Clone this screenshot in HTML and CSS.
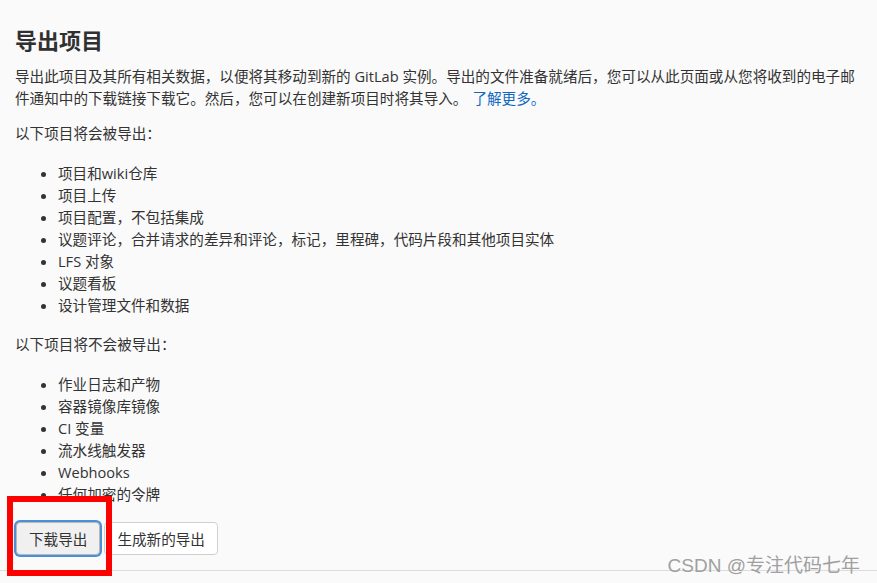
FILE: index.html
```html
<!DOCTYPE html>
<html lang="zh-CN">
<head>
    <meta charset="UTF-8">
    <title>导出项目</title>
    <link rel="stylesheet" href="styles.css">
</head>
<body>
    <div class="page">
        <div class="content">
            <h3 class="title">导出项目</h3>
            <p class="intro">导出此项目及其所有相关数据，以便将其移动到新的 GitLab 实例。导出的文件准备就绪后，您可以从此页面或从您将收到的电子邮件通知中的下载链接下载它。然后，您可以在创建新项目时将其导入。<a href="#">了解更多。</a></p>

            <p class="label">以下项目将会被导出：</p>
            <ul class="items">
                <li>项目和wiki仓库</li>
                <li>项目上传</li>
                <li>项目配置，不包括集成</li>
                <li>议题评论，合并请求的差异和评论，标记，里程碑，代码片段和其他项目实体</li>
                <li>LFS 对象</li>
                <li>议题看板</li>
                <li>设计管理文件和数据</li>
            </ul>

            <p class="label">以下项目将不会被导出：</p>
            <ul class="items">
                <li>作业日志和产物</li>
                <li>容器镜像库镜像</li>
                <li>CI 变量</li>
                <li>流水线触发器</li>
                <li>Webhooks</li>
                <li>任何加密的令牌</li>
            </ul>

            <div class="actions">
                <button class="btn btn-download">下载导出</button>
                <button class="btn">生成新的导出</button>
            </div>
        </div>
        <div class="footer-line"></div>

        <!-- annotation + watermark from the screenshot -->
        <div class="highlight"></div>
        <div class="watermark">CSDN @专注代码七年</div>
    </div>
</body>
</html>
```

FILE: styles.css
```css
body {
    margin: 0;
    background-color: #fafafa;
    font-family: "Open Sans", "Noto Sans CJK SC", sans-serif;
    color: #333;
}

.page {
    position: relative;
    width: 877px;
    height: 583px;
    overflow: hidden;
}

.content {
    padding: 27px 20px 0 15px;
    font-size: 14.6px;
    line-height: 22px;
}

.title {
    margin: 0 0 12px;
    font-size: 22px;
    line-height: 26px;
    font-weight: bold;
    color: #303030;
}

.intro {
    margin: 0 0 13px;
}

.intro a {
    margin-left: 5px;
    color: #1068bf;
    text-decoration: none;
}

.label {
    margin: 0 0 18px;
}

.items {
    margin: 0 0 17px;
    padding-left: 43px;
}

.actions {
    display: flex;
    gap: 4px;
    margin-top: 16px;
}

.btn {
    height: 33px;
    padding: 0 12px;
    font-family: inherit;
    font-size: 14.6px;
    color: #333;
    background: #fff;
    border: 1px solid #d0d0d0;
    border-radius: 4px;
}

.btn-download {
    margin-left: 1px;
    background: #f0f0f0;
    border-color: #b8b8b8;
    box-shadow: 0 0 0 2px #4a90d9;
}

.footer-line {
    margin-top: 15px;
    height: 1px;
    background: #dcdcdc;
}

.highlight {
    position: absolute;
    left: 7px;
    top: 496px;
    width: 93px;
    height: 68px;
    border: 6px solid #f00;
}

.watermark {
    position: absolute;
    right: 17px;
    top: 550px;
    font-family: "Liberation Sans", "Noto Sans CJK SC", sans-serif;
    font-size: 19px;
    color: #a0a0a0;
}
```
